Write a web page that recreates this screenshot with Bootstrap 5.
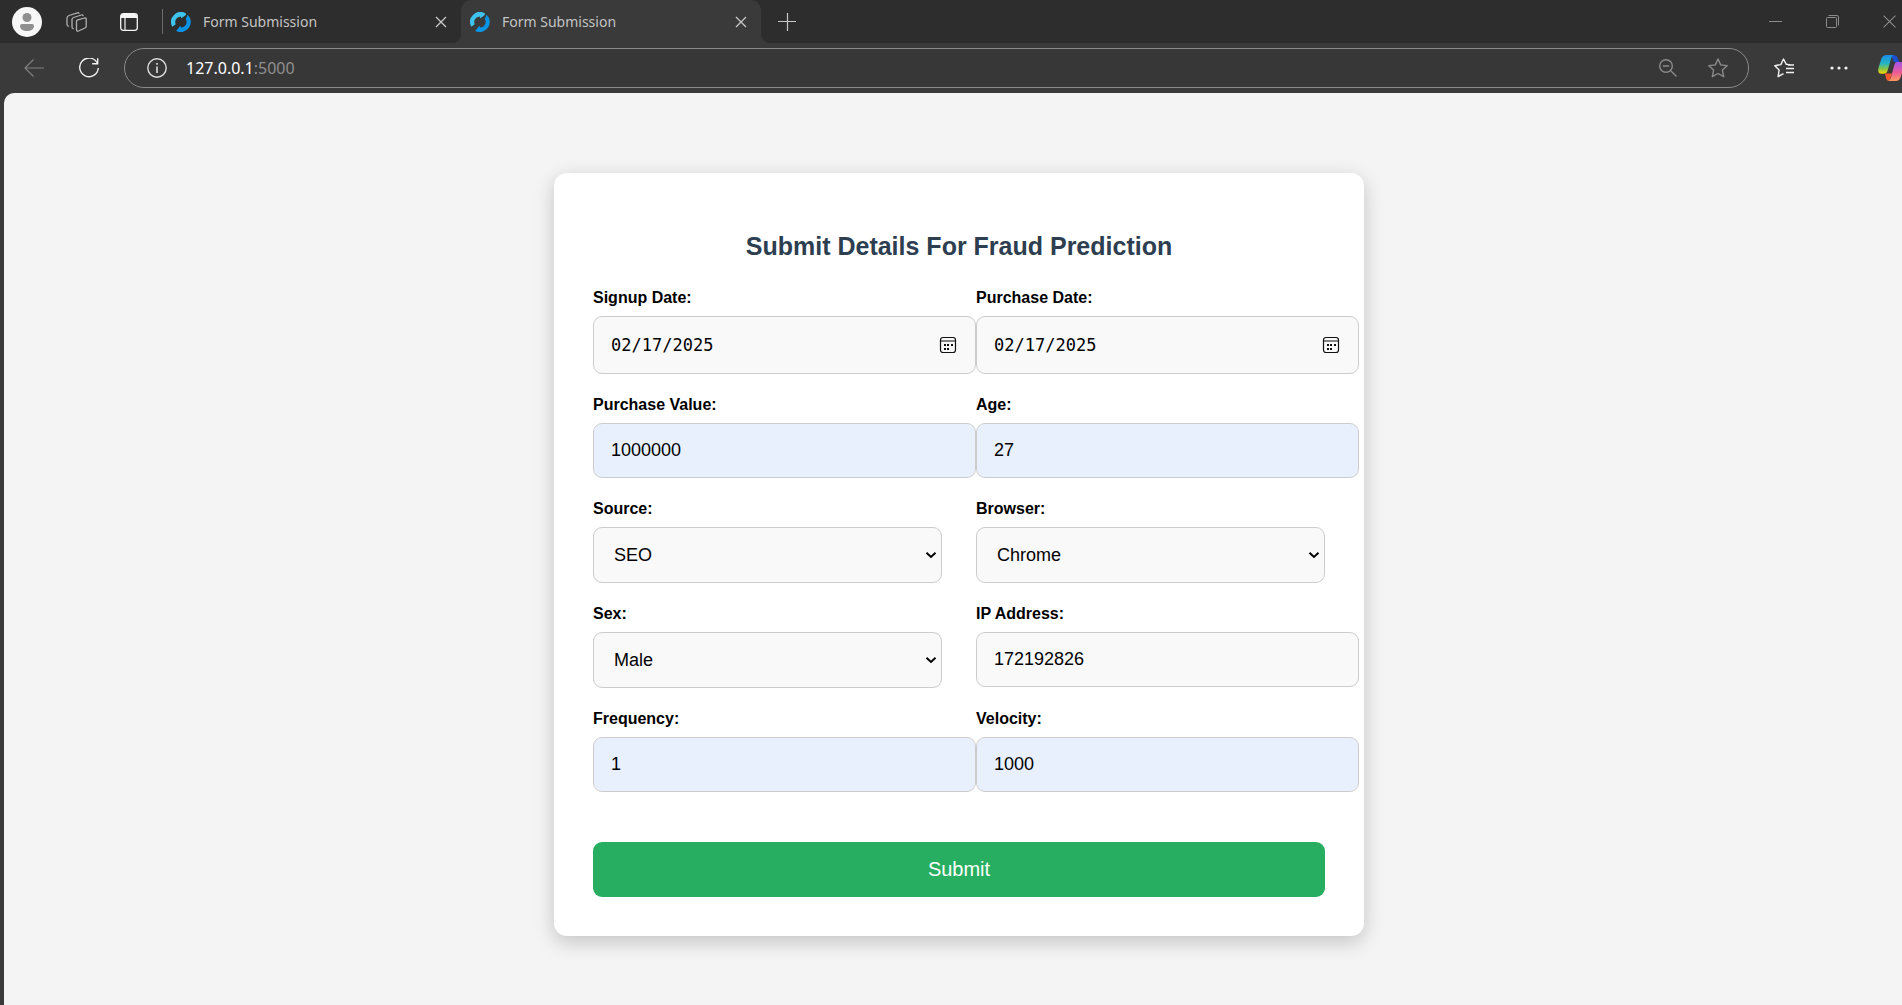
<!DOCTYPE html>
<html lang="en">
<head>
<meta charset="utf-8">
<meta name="viewport" content="width=device-width, initial-scale=1">
<title>Form Submission</title>
<link href="https://cdn.jsdelivr.net/npm/bootstrap@5.3.0/dist/css/bootstrap.min.css" rel="stylesheet">
<style>
  body { background: #3a3a3a; font-family: "Liberation Sans", Arial, sans-serif; overflow: hidden; }
  /* the window runs a little past the right edge of the screen */
  .window-frame { width: calc(100% + 12px); }
  .window-frame svg { display: block; flex-shrink: 0; }
  .chrome-btn { background: none; border: 0; padding: 0; color: #c8c8c8; display: block; flex-shrink: 0; }
  .chrome-ui { font-family: "Noto Sans", "Open Sans", sans-serif; }

  .title-bar { height: 43px; background: #2d2d2d; padding: 0 18px 0 12px; }
  .avatar-disc { margin-right: 24px; }
  .tab-actions { margin-left: 33px; }
  .tab-divider { width: 1px; height: 25px; background: #6a6a6a; margin-left: 24px; }
  .page-tab { width: 300px; height: 43px; padding: 0 14px 0 9px; color: #c4c4c4; font-size: 14px; position: relative; }
  .page-tab a { color: inherit; text-decoration: none; margin-left: 12px; line-height: 20px; }
  .page-tab.first-tab { width: 298px; padding-left: 8px; }
  .page-tab.current { background: #3a3a3a; border-radius: 10px 10px 0 0; }
  .page-tab.current::before, .page-tab.current::after {
    content: ""; position: absolute; bottom: 0; width: 10px; height: 10px;
  }
  .page-tab.current::before { left: -10px; background: radial-gradient(circle at 0 0, #2d2d2d 10px, #3a3a3a 11px); }
  .page-tab.current::after { right: -10px; background: radial-gradient(circle at 100% 0, #2d2d2d 10px, #3a3a3a 11px); }
  .new-tab { margin-left: 17px; }
  .window-controls { gap: 44px; }
  .window-controls .chrome-btn { color: #8c8c8c; }

  .tool-bar { height: 50px; padding: 0 10px 0 24px; }
  .reload-btn { margin: 0 25px 0 35px; }
  .address-pill { height: 40px; border: 1px solid #8a8a8a; border-radius: 20px; background: #373737; padding: 0 20px 0 22px; }
  .url-link { color: #fff; font-size: 16px; line-height: 24px; text-decoration: none; margin-left: 19px; }
  .port-part { color: #8f8f8f; }
  .dim-btn { color: #8a8a8a; }
  .star-btn { margin-left: 31px; }
  .fav-btn { margin-left: 25px; color: #f2f2f2; }
  .more-btn { margin-left: 36px; color: #f2f2f2; }
  .copilot-btn { margin-left: 30px; }

  .viewport-pane { margin-left: 4px; background: #f4f4f4; border-top-left-radius: 10px; min-height: calc(100vh - 93px); padding-top: 80px; }
  .form-panel { max-width: 810px; padding: 39px; border: 0; border-radius: 13px; box-shadow: 0 6px 20px rgba(0,0,0,.2); }
  .form-panel h1 { font-size: 25px; line-height: 30px; font-weight: 700; color: #2c3e50; margin: 19px 0 24px; }
  .field-grid { --bs-gutter-x: 34px; }
  .field-grid > div { margin-bottom: 18px; }
  .form-panel .form-label { font-size: 16px; line-height: 26px; font-weight: 700; color: #000; margin-bottom: 5px; display: block; }
  .form-panel .form-control, .form-panel .field-select {
    border: 1px solid #ccc; border-radius: 9px; background-color: #f9f9f9; color: #000; font-size: 18px; line-height: 21px; height: 55px;
  }
  /* inputs run across the column gutter, selects stop at the column edge */
  .form-panel .form-control { width: calc(100% + 34px); padding: 16px 17px; }
  .form-panel .form-control.filled { background-color: #e8f0fe; }
  .form-panel input[type="date"] { height: 58px; font-family: "DejaVu Sans Mono", monospace; font-size: 17px; }
  .form-panel input[type="date"]::-webkit-calendar-picker-indicator {
    width: 18px; height: 18px; padding: 0; margin-right: 1px; opacity: 1;
    background: url("data:image/svg+xml,%3Csvg xmlns='http://www.w3.org/2000/svg' viewBox='0 0 18 18'%3E%3Crect x='1.500' y='1.500' width='15' height='15' rx='2.500' fill='none' stroke='%23111' stroke-width='1.200'/%3E%3Cpath d='M2 5h14' stroke='%23111' stroke-width='1.200'/%3E%3Cpath d='M5 8h2v2H5zM8 8h2v2H8zM12 8h2v2h-2zM5 12h2v2H5zM8 12h2v2H8z' fill='%23111'/%3E%3C/svg%3E") center/18px no-repeat;
  }
  .form-panel .field-select { width: 100%; height: 56px; padding: 0 5px 0 20px; appearance: none;
    background-image: url("data:image/svg+xml,%3Csvg xmlns='http://www.w3.org/2000/svg' viewBox='0 0 12 8'%3E%3Cpath d='M1.500 1.800 6 6l4.500-4.200' fill='none' stroke='%23000' stroke-width='2'/%3E%3C/svg%3E");
    background-repeat: no-repeat; background-position: right 4px center; background-size: 12px 8px; }
  .submit-btn { background: #27ae60; color: #fff; border: 0; border-radius: 9px; font-size: 20px; line-height: 23px; padding: 16px; margin-top: 32px; }
  .submit-btn:hover { background: #219150; color: #fff; }
</style>
</head>
<body>
<svg width="0" height="0" class="position-absolute" aria-hidden="true">
  <symbol id="site-icon" viewBox="0 0 20 20">
    <path d="M1.300 14.800A10 10 0 0 1 14.800 1.200l.1 1.900-4.600 3.200-.6-1.900A5.600 5.600 0 0 0 4.700 12.200z" fill="#3fc3ee"/>
    <path d="M16.700 2.800A10 10 0 0 1 5.200 18.900l4.100-5.200.8 1.900a5.600 5.600 0 0 0 4.600-8.700z" fill="#0a94e6"/>
  </symbol>
  <symbol id="cross" viewBox="0 0 12 12"><path d="M1 1l10 10M11 1 1 11" stroke="currentColor" stroke-width="1.300" fill="none"/></symbol>
</svg>

<div class="window-frame">
  <header class="chrome-ui">
    <div class="title-bar d-flex align-items-center">
      <button class="chrome-btn avatar-disc" aria-label="Profile">
        <svg width="30" height="30" viewBox="0 0 30 30"><circle cx="15" cy="15" r="15" fill="#f7f7f7"/><circle cx="15" cy="10.500" r="4.500" fill="#8f8f8f"/><path d="M10 17h10a2 2 0 0 1 2 2c0 3-3 5-7 5s-7-2-7-5a2 2 0 0 1 2-2z" fill="#8f8f8f"/></svg>
      </button>
      <button class="chrome-btn" aria-label="Workspaces">
        <svg width="21" height="20" viewBox="0 0 21 20" fill="none" stroke="#b0b0b0" stroke-width="1.300" stroke-linejoin="round" stroke-linecap="round"><path d="M11 8.200 18.500 6q1.700-.4 1.700 1.300v7q0 1.300-1.200 1.700l-6.500 3q-2 .7-2-1.200v-8q0-1.200.5-1.600z"/><path d="M17 3.600q-.3-1-1.700-.6L7.500 5.500Q6 6 6 7.500V15q0 1.500 1.300 1.600"/><path d="M13 1.300q-.4-.8-1.600-.5L3 3.500Q1 4.200 1 6v6.500q0 1.500 1.500 1.600"/></svg>
      </button>
      <button class="chrome-btn tab-actions" aria-label="Tab actions">
        <svg width="18" height="18" viewBox="0 0 18 18"><rect x=".7" y=".7" width="16.600" height="16.600" rx="2.500" fill="none" stroke="#f5f5f5" stroke-width="1.300"/><path d="M1 5V3a2 2 0 0 1 2-2h12a2 2 0 0 1 2 2v2z" fill="#f5f5f5"/><path d="M5 5v12" stroke="#f5f5f5" stroke-width="1.200"/></svg>
      </button>
      <span class="tab-divider"></span>
      <div class="page-tab first-tab d-flex align-items-center">
        <svg width="20" height="20"><use href="#site-icon"/></svg>
        <a href="#">Form Submission</a>
        <button class="chrome-btn ms-auto" aria-label="Close tab"><svg width="12" height="12"><use href="#cross"/></svg></button>
      </div>
      <div class="page-tab current d-flex align-items-center">
        <svg width="20" height="20"><use href="#site-icon"/></svg>
        <a href="#">Form Submission</a>
        <button class="chrome-btn ms-auto" aria-label="Close tab"><svg width="12" height="12"><use href="#cross"/></svg></button>
      </div>
      <button class="chrome-btn new-tab" aria-label="New tab"><svg width="18" height="18" viewBox="0 0 18 18"><path d="M9.500 0v18M0 8.500h18" stroke="currentColor" stroke-width="1.200"/></svg></button>
      <div class="window-controls d-flex align-items-center ms-auto">
        <button class="chrome-btn" aria-label="Minimize"><svg width="13" height="13" viewBox="0 0 13 13"><path d="M0 6.500h13" stroke="currentColor"/></svg></button>
        <button class="chrome-btn" aria-label="Restore"><svg width="13" height="13" viewBox="0 0 13 13" fill="none" stroke="currentColor"><rect x=".5" y="2.500" width="10" height="10" rx="1"/><path d="M2.500.5H11q1.500 0 1.500 1.500v8.500"/></svg></button>
        <button class="chrome-btn" aria-label="Close"><svg width="13" height="13" viewBox="0 0 12 12"><path d="M.5.5l11 11M11.500.5l-11 11" stroke="currentColor"/></svg></button>
      </div>
    </div>

    <div class="tool-bar d-flex align-items-center">
      <button class="chrome-btn" aria-label="Back"><svg width="20" height="18" viewBox="0 0 20 18" fill="none" stroke="#808080" stroke-width="1.200"><path d="M20 9H1M9.500.5 1 9l8.500 8.500"/></svg></button>
      <button class="chrome-btn reload-btn" aria-label="Refresh"><svg width="20" height="20" viewBox="0 0 20 20" fill="none" stroke="#f2f2f2" stroke-width="1.400"><path d="M18.500 5.500A9.300 9.300 0 1 0 19.300 10M18.700.3v5.500h-5.500"/></svg></button>
      <div class="address-pill d-flex align-items-center flex-grow-1">
        <svg width="20" height="20" viewBox="0 0 20 20" fill="none" stroke="#dedede" stroke-width="1.400"><circle cx="10" cy="10" r="9.200"/><path d="M10 8.500v6.500M10 5v1.800" stroke-width="1.600"/></svg>
        <a href="#" class="url-link">127.0.0.1<span class="port-part">:5000</span></a>
        <button class="chrome-btn dim-btn ms-auto" aria-label="Zoom out"><svg width="18" height="18" viewBox="0 0 18 18" fill="none" stroke="currentColor" stroke-width="1.400"><circle cx="7" cy="7" r="6.300"/><path d="M3.800 7h6.400M11.500 11.500l6 6"/></svg></button>
        <button class="chrome-btn dim-btn star-btn" aria-label="Add to favorites"><svg width="20" height="20" viewBox="0 0 20 20" fill="none" stroke="currentColor" stroke-width="1.400" stroke-linejoin="round"><path d="M10 1l2.700 5.900 6.500.8-4.800 4.400 1.300 6.600-5.700-3.200-5.700 3.200 1.300-6.600L.8 7.700l6.500-.8z"/></svg></button>
      </div>
      <button class="chrome-btn fav-btn" aria-label="Favorites"><svg width="20" height="20" viewBox="0 0 20 20" fill="none" stroke="currentColor" stroke-width="1.400" stroke-linejoin="round"><path d="M16.500 6.900 12.300 6.300 9.500 1 6.800 6.600.8 7.700l4.300 4.400-1 6.500 5.400-3M12 10.500h8M14 7h6M12 14.500h8"/></svg></button>
      <button class="chrome-btn more-btn" aria-label="Settings and more"><svg width="18" height="4" viewBox="0 0 18 4" fill="currentColor"><circle cx="2" cy="2" r="1.600"/><circle cx="9" cy="2" r="1.600"/><circle cx="16" cy="2" r="1.600"/></svg></button>
      <button class="chrome-btn copilot-btn" aria-label="Copilot">
        <svg width="26" height="26" viewBox="0 0 26 26">
          <defs>
            <linearGradient id="cpA" x1="0" y1="0" x2="0" y2="1"><stop offset="0" stop-color="#1b8be8"/><stop offset=".45" stop-color="#25b5c4"/><stop offset=".75" stop-color="#8cc63f"/><stop offset="1" stop-color="#ffd400"/></linearGradient>
            <linearGradient id="cpB" x1="0" y1="0" x2="0" y2="1"><stop offset="0" stop-color="#a455f0"/><stop offset=".55" stop-color="#ec5a96"/><stop offset="1" stop-color="#ff9a5c"/></linearGradient>
          </defs>
          <path d="M15 0h-2l3 7h5l-1.500-4.500Q18.500 0 15 0z" fill="#1a4fd0"/>
          <path d="M7 18.500h7L11.500 26Q8.500 26 8 23z" fill="#f4572c"/>
          <path d="M8.500 0H16q-2 0-2.800 3L9.500 16q-.8 2.800-3.500 2.800H3.500Q-.8 18.800.4 13L3.300 4Q4.700 0 8.500 0z" fill="url(#cpA)"/>
          <path d="M19 7h3.500q4.300 0 3.200 5.500L22.700 22q-1.200 4-5 4H10q2 0 2.800-3l3.500-13Q17 7 19 7z" fill="url(#cpB)"/>
        </svg>
      </button>
    </div>
  </header>

  <main class="viewport-pane">
    <form class="form-panel card mx-auto" onsubmit="return false">
      <h1 class="text-center">Submit Details For Fraud Prediction</h1>
      <div class="row field-grid">
        <div class="col-6">
          <label class="form-label" for="signup">Signup Date:</label>
          <input class="form-control" type="date" id="signup" value="2025-02-17">
        </div>
        <div class="col-6">
          <label class="form-label" for="purchase">Purchase Date:</label>
          <input class="form-control" type="date" id="purchase" value="2025-02-17">
        </div>
        <div class="col-6">
          <label class="form-label" for="amount">Purchase Value:</label>
          <input class="form-control filled" type="text" inputmode="numeric" id="amount" value="1000000">
        </div>
        <div class="col-6">
          <label class="form-label" for="age">Age:</label>
          <input class="form-control filled" type="text" inputmode="numeric" id="age" value="27">
        </div>
        <div class="col-6">
          <label class="form-label" for="source">Source:</label>
          <select class="field-select" id="source"><option>SEO</option></select>
        </div>
        <div class="col-6">
          <label class="form-label" for="browser">Browser:</label>
          <select class="field-select" id="browser"><option>Chrome</option></select>
        </div>
        <div class="col-6">
          <label class="form-label" for="sex">Sex:</label>
          <select class="field-select" id="sex"><option>Male</option></select>
        </div>
        <div class="col-6">
          <label class="form-label" for="ip">IP Address:</label>
          <input class="form-control" type="text" id="ip" value="172192826">
        </div>
        <div class="col-6">
          <label class="form-label" for="frequency">Frequency:</label>
          <input class="form-control filled" type="text" inputmode="numeric" id="frequency" value="1">
        </div>
        <div class="col-6">
          <label class="form-label" for="velocity">Velocity:</label>
          <input class="form-control filled" type="text" inputmode="numeric" id="velocity" value="1000">
        </div>
      </div>
      <button class="btn submit-btn w-100" type="submit">Submit</button>
    </form>
  </main>
</div>
<script src="https://cdn.jsdelivr.net/npm/bootstrap@5.3.0/dist/js/bootstrap.bundle.min.js"></script>
</body>
</html>
